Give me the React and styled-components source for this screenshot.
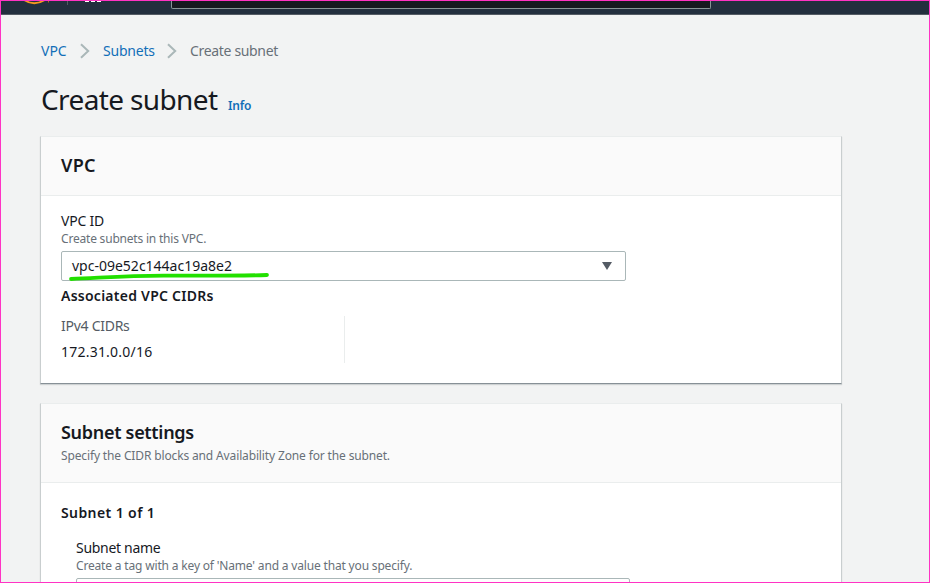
import React from 'react';
import styled, { createGlobalStyle } from 'styled-components';

const GlobalStyle = createGlobalStyle`
  * { box-sizing: border-box; }
  body { margin: 0; overflow: hidden; }
`;

const Frame = styled.div`
  position: relative;
  width: 930px;
  height: 583px;
  overflow: hidden;
  background: #f2f3f3;
  color: #16191f;
  font-family: 'Noto Sans', 'Open Sans', sans-serif;
  font-size: 14px;
  line-height: 22px;
  white-space: nowrap;

  &::after {
    content: '';
    position: absolute;
    inset: 0;
    border: 1px solid #ff33c4;
    pointer-events: none;
  }
`;

const TopNav = styled.header`
  display: flex;
  align-items: flex-start;
  height: 15px;
  background: #232f3e;
  border-bottom: 1px solid #545b64;
`;

const NavIcons = styled.svg`
  display: block;
  width: 171px;
  height: 14px;
`;

const SearchBox = styled.div`
  width: 540px;
  height: 9px;
  background: #16191f;
  border: 1px solid #879596;
  border-top: 0;
  border-radius: 0 0 2px 2px;
`;

const Content = styled.main`
  width: 802px;
  margin-left: 40px;
  padding-top: 25px;
`;

const Breadcrumbs = styled.nav`
  display: flex;
  align-items: center;
  height: 22px;
  padding-left: 1px;
`;

const Crumb = styled.span`
  flex: none;
  width: ${(p) => p.$width}px;
  color: ${(p) => (p.$current ? '#687078' : '#126fb8')};
  letter-spacing: ${(p) => p.$track || 0}px;
`;

const Chevron = styled.svg`
  flex: none;
  width: 10px;
  height: 16px;
  margin: 0 13px 0 12px;
`;

const TitleRow = styled.div`
  display: flex;
  align-items: baseline;
  height: 36px;
  margin: 19px 0 19px;
  padding-left: 1px;
`;

const Title = styled.h1`
  margin: 0;
  width: 187px;
  font-size: 28px;
  line-height: 36px;
  font-weight: 400;
  letter-spacing: -0.62px;
`;

const InfoLink = styled.a`
  color: #126fb8;
  font-size: 12px;
  font-weight: 600;
  line-height: 20px;
  letter-spacing: -0.2px;
`;

const Panel = styled.section`
  height: ${(p) => p.$height}px;
  margin-bottom: 19px;
  background: #fff;
  border: 1px solid #c9cecf;
  border-top-color: #eaeded;
  border-bottom-color: #879096;
  box-shadow: 0 1px 1px rgba(0, 28, 36, 0.15);
`;

const PanelHeader = styled.div`
  display: flex;
  flex-direction: column;
  gap: 4px;
  height: ${(p) => p.$height}px;
  padding: 16px 20px 0;
  background: #fafafa;
  border-bottom: 1px solid #eaeded;
`;

const PanelTitle = styled.h2`
  margin: 0;
  font-size: 18px;
  line-height: 24px;
  font-weight: 600;
  letter-spacing: ${(p) => p.$track}px;
`;

const PanelBody = styled.div`
  padding: ${(p) => p.$top}px 20px 0;
`;

const Label = styled.div`
  height: 22px;
  letter-spacing: ${(p) => p.$track || 0}px;
`;

const Hint = styled.div`
  height: 16px;
  color: #687078;
  font-size: 12px;
  line-height: 16px;
  letter-spacing: ${(p) => p.$track}px;
`;

const FieldHint = styled(Hint)`
  margin-top: -1px;
`;

const Select = styled.div`
  position: relative;
  display: flex;
  align-items: center;
  justify-content: space-between;
  width: 565px;
  height: 30px;
  margin: 4px 0;
  padding: 0 13px 0 10px;
  border: 1px solid #aab7b8;
  border-radius: 2px;
`;

const Caret = styled.svg`
  width: 10px;
  height: 8px;
`;

const Underline = styled.svg`
  position: absolute;
  left: 5px;
  top: 19px;
  width: 204px;
  height: 10px;
`;

const Subheading = styled.h3`
  margin: 0;
  height: 22px;
  font-size: 14px;
  font-weight: 600;
  letter-spacing: ${(p) => p.$track}px;
`;

const CidrColumn = styled.div`
  display: flex;
  flex-direction: column;
  width: 284px;
  height: 47px;
  margin-top: 9px;
  border-right: 1px solid #eaeded;
  line-height: 22px;
  gap: 4px;
`;

const CidrLabel = styled.span`
  margin-top: -1px;
  color: #545b64;
  letter-spacing: -0.27px;
`;

const CidrValue = styled.span`
  letter-spacing: 0.22px;
`;

const SubnetFields = styled.div`
  margin-top: 13px;
  padding-left: 15px;
`;

const TextInput = styled.div`
  width: 554px;
  height: 30px;
  margin-top: 4px;
  border: 1px solid #aab7b8;
  border-radius: 2px;
`;

const Separator = () => (
  <Chevron viewBox="0 0 10 16" fill="none" stroke="#aab7b8" strokeWidth="2">
    <path d="M1 1.2 8.2 8 1 14.8" />
  </Chevron>
);

export default function App() {
  return (
    <>
      <GlobalStyle />
      <Frame>
        <TopNav>
          <NavIcons viewBox="0 0 171 14">
            <path d="M24 0Q34 6.5 45 0" fill="none" stroke="#f7981d" strokeWidth="1.8" />
            <path d="M48.5 0V2.5" stroke="#b8681d" />
            <path d="M67.5 0V5" stroke="#545b64" />
            <path d="M85 0h4v2h-4zM91 0h4v2h-4zM97 0h4v2h-4z" fill="#fff" />
          </NavIcons>
          <SearchBox />
        </TopNav>
        <Content>
          <Breadcrumbs>
            <Crumb $width={27}>VPC</Crumb>
            <Separator />
            <Crumb $width={52} $track={-0.22}>Subnets</Crumb>
            <Separator />
            <Crumb $current $width={88} $track={-0.33}>Create subnet</Crumb>
          </Breadcrumbs>
          <TitleRow>
            <Title>Create subnet</Title>
            <InfoLink>Info</InfoLink>
          </TitleRow>
          <Panel $height={248}>
            <PanelHeader $height={59}>
              <PanelTitle $track={0.3}>VPC</PanelTitle>
            </PanelHeader>
            <PanelBody $top={14}>
              <Label $track={-0.2}>VPC ID</Label>
              <FieldHint $track={-0.2}>Create subnets in this VPC.</FieldHint>
              <Select>
                <span>vpc-09e52c144ac19a8e2</span>
                <Caret viewBox="0 0 10 8">
                  <path d="M0 0h10L5 8z" fill="#545b64" />
                </Caret>
                <Underline viewBox="0 0 204 10" fill="none" stroke="#22e000" strokeWidth="3.8" strokeLinecap="round">
                  <path d="M4 8C35 6.8 60 4.4 100 4.6S165 5 200 4" />
                </Underline>
              </Select>
              <Subheading $track={0.25}>Associated VPC CIDRs</Subheading>
              <CidrColumn>
                <CidrLabel>IPv4 CIDRs</CidrLabel>
                <CidrValue>172.31.0.0/16</CidrValue>
              </CidrColumn>
            </PanelBody>
          </Panel>
          <Panel $height={300}>
            <PanelHeader $height={79}>
              <PanelTitle $track={-0.3}>Subnet settings</PanelTitle>
              <Hint $track={-0.14}>Specify the CIDR blocks and Availability Zone for the subnet.</Hint>
            </PanelHeader>
            <PanelBody $top={19}>
              <Subheading $track={0.4}>Subnet 1 of 1</Subheading>
              <SubnetFields>
                <Label $track={-0.3}>Subnet name</Label>
                <FieldHint $track={-0.17}>Create a tag with a key of &#39;Name&#39; and a value that you specify.</FieldHint>
                <TextInput />
              </SubnetFields>
            </PanelBody>
          </Panel>
        </Content>
      </Frame>
    </>
  );
}
